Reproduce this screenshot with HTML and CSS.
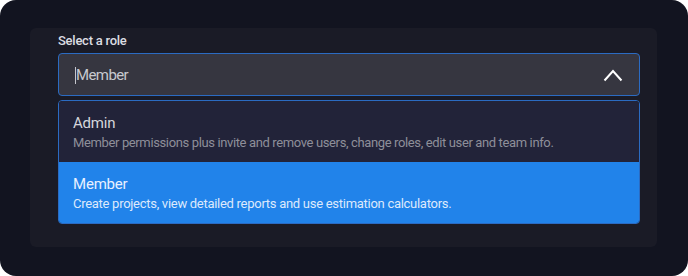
FILE: index.html
```html
<!DOCTYPE html>
<html lang="en">
<head>
  <meta charset="UTF-8">
  <meta name="viewport" content="width=device-width, initial-scale=1.0">
  <title>Select a role</title>
  <link rel="stylesheet" href="styles.css">
</head>
<body>

<div class="frame">
  <div class="panel">
    <label class="field-label" for="roleInput">Select a role</label>

    <!-- Select box, open -->
    <div class="select">
      <span class="caret"></span>
      <input id="roleInput" class="select-input" type="text" value="Member" readonly>
      <svg class="chevron" width="20" height="14" viewBox="0 0 20 14">
        <path d="M1.5 12.5 L10 3 L18.5 12.5" fill="none" stroke="#fff" stroke-width="2"/>
      </svg>
    </div>

    <!-- Options list -->
    <ul class="options">
      <li class="option">
        <div class="option-title">Admin</div>
        <div class="option-desc">Member permissions plus invite and remove users, change roles, edit user and team info.</div>
      </li>
      <li class="option selected">
        <div class="option-title">Member</div>
        <div class="option-desc wide">Create projects, view detailed reports and use estimation calculators.</div>
      </li>
    </ul>
  </div>
</div>

</body>
</html>
```

FILE: styles.css
```css
/* Page */
body {
  margin: 0;
  background-color: #fff;
  font-family: Roboto, "Noto Sans", sans-serif;
}
.frame {
  width: 688px;
  height: 276px;
  box-sizing: border-box;
  background-color: #121420;
  border-radius: 16px;
  padding: 28px 31px 29px 30px;
}
.panel {
  height: 100%;
  box-sizing: border-box;
  background-color: #1a1b26;
  border-radius: 6px;
  padding: 5px 17px 0 28px;
}

/* Label */
.field-label {
  display: block;
  color: #dcdde2;
  font-size: 13px;
  line-height: 16px;
  font-weight: 500;
  letter-spacing: -0.25px;
  margin-bottom: 4px;
}

/* Select box */
.select {
  height: 43px;
  box-sizing: border-box;
  display: flex;
  align-items: center;
  background-color: #363640;
  border: 1px solid #2b6bc2;
  border-radius: 4px;
  padding: 0 16px 0 16px;
}
.caret {
  width: 1px;
  height: 17px;
  background-color: #c5c6cc;
  margin-top: 1px;
}
.select-input {
  flex: 1;
  background: none;
  border: none;
  outline: none;
  padding: 0;
  color: #c8c9cf;
  font-family: inherit;
  font-size: 15px;
  letter-spacing: -0.6px;
}
.chevron {
  display: block;
}

/* Options */
.options {
  list-style: none;
  margin: 4px 0 0 0;
  padding: 0;
  border: 1px solid #2b6bc2;
  border-radius: 4px;
  overflow: hidden;
}
.option {
  padding: 13px 14px 10px 14px;
  background-color: #222339;
}
.option.selected {
  background-color: #2183ea;
}
.option-title {
  color: #d5d6dc;
  font-size: 15px;
  line-height: 18px;
  letter-spacing: -0.2px;
}
.option-desc {
  color: #8e8f99;
  font-size: 13px;
  line-height: 18px;
  letter-spacing: -0.37px;
  margin-top: 2px;
}
.option-desc.wide {
  letter-spacing: -0.28px;
}
.option.selected .option-title {
  color: #e8f0ff;
}
.option.selected .option-desc {
  color: #dde9fc;
}
```
